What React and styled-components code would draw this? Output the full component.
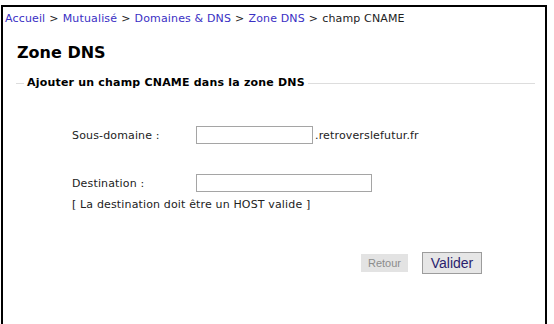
import React from 'react'
import styled, { createGlobalStyle } from 'styled-components'

const GlobalStyle = createGlobalStyle`
  html, body {
    margin: 0;
    padding: 0;
    background: #fff;
  }
  body {
    font-family: "DejaVu Sans", Verdana, sans-serif;
    font-size: 11px;
    letter-spacing: 0.15px;
    color: #222;
  }
`

const Frame = styled.div`
  margin: 5px 0 0 1px;
  width: 546px;
  height: 330px;
  border: 2px solid #000;
  border-bottom: none;
  box-sizing: border-box;
`

const Crumbs = styled.nav`
  padding: 5px 2px 0;
  height: 14px;
  line-height: 14px;
  white-space: nowrap;
`

const Crumb = styled.a`
  color: #3a2fc4;
  text-decoration: none;
`

const Sep = styled.span`
  color: #222;
  margin: 0 4px;
`

const Title = styled.h1`
  margin: 17px 0 0 14px;
  font-size: 16px;
  font-weight: bold;
  letter-spacing: 0;
  color: #000;
  line-height: 20px;
`

const Box = styled.fieldset`
  margin: 13px 10px 0 13px;
  padding: 0;
  border: none;
  border-top: 1px solid #ddd;
  min-inline-size: auto;
`

const Legend = styled.legend`
  margin-left: 8px;
  padding: 0 3px;
  font-weight: bold;
  letter-spacing: 0.2px;
  color: #000;
  line-height: 14px;
`

const Form = styled.div`
  display: grid;
  grid-template-columns: 124px auto;
  align-items: center;
  padding: 36px 0 0 56px;
`

const Label = styled.label`
  color: #222;
`

const Field = styled.div`
  display: flex;
  align-items: center;
`

const Input = styled.input`
  box-sizing: border-box;
  width: ${({ $w }) => $w}px;
  height: 18px;
  margin: 0;
  padding: 1px 3px;
  border: 1px solid #a5a5a5;
  background: #fff;
  font: inherit;
`

const Suffix = styled.span`
  margin-left: 2px;
`

const Spacer = styled.div`
  grid-column: 1 / -1;
  height: ${({ $h }) => $h}px;
`

const Hint = styled.div`
  grid-column: 1 / -1;
  margin-top: 6px;
`

const Actions = styled.div`
  display: flex;
  justify-content: flex-end;
  align-items: center;
  gap: 14px;
  padding: 41px 53px 0 0;
`

const Button = styled.button`
  box-sizing: border-box;
  margin: 0;
  font-family: "Liberation Sans", Arial, sans-serif;
  letter-spacing: 0;
  cursor: pointer;
  background: ${({ $disabled }) => ($disabled ? '#e3e3e3' : '#e6e6e6')};
  color: ${({ $disabled }) => ($disabled ? '#8c8c8c' : '#2a1d6e')};
  border: ${({ $disabled }) => ($disabled ? '1px solid #e3e3e3' : '1px solid #9c9c9c')};
  font-size: ${({ $disabled }) => ($disabled ? '11px' : '14px')};
  width: ${({ $disabled }) => ($disabled ? '47px' : '60px')};
  height: ${({ $disabled }) => ($disabled ? '18px' : '22px')};
  padding: 0;
`

export default function App() {
  return (
    <>
      <GlobalStyle />
      <Frame>
        <Crumbs>
          <Crumb href="#">Accueil</Crumb>
          <Sep>&gt;</Sep>
          <Crumb href="#">Mutualisé</Crumb>
          <Sep>&gt;</Sep>
          <Crumb href="#">Domaines &amp; DNS</Crumb>
          <Sep>&gt;</Sep>
          <Crumb href="#">Zone DNS</Crumb>
          <Sep>&gt;</Sep>
          champ CNAME
        </Crumbs>
        <Title>Zone DNS</Title>
        <Box>
          <Legend>Ajouter un champ CNAME dans la zone DNS</Legend>
          <Form>
            <Label>Sous-domaine :</Label>
            <Field>
              <Input $w={117} />
              <Suffix>.retroverslefutur.fr</Suffix>
            </Field>
            <Spacer $h={30} />
            <Label>Destination :</Label>
            <Field>
              <Input $w={176} />
            </Field>
            <Hint>[ La destination doit être un HOST valide ]</Hint>
          </Form>
          <Actions>
            <Button $disabled disabled>Retour</Button>
            <Button>Valider</Button>
          </Actions>
        </Box>
      </Frame>
    </>
  )
}
